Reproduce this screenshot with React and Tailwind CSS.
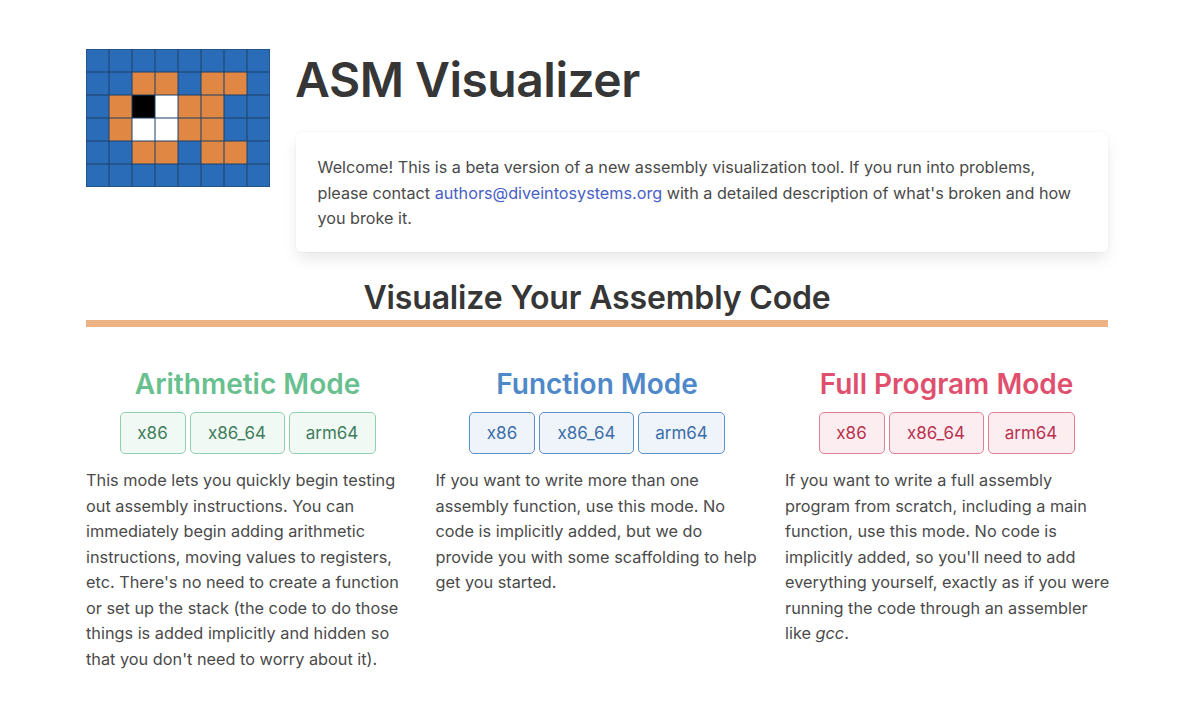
const BLUE = "#2b6cb8";
const ORANGE = "#e08744";

// 8x6 logo: b blue, o orange, k black, w white
const logoRows = ["bbbbbbbb", "bbooboob", "bokwoobb", "bowwoobb", "bboobOOb".toLowerCase(), "bbbbbbbb"];
const logoColors = { b: BLUE, o: ORANGE, k: "#000000", w: "#ffffff" };

function Logo() {
  return (
    <svg width="184" height="138" viewBox="0 0 184 138" className="shrink-0">
      {logoRows.map((row, y) =>
        row.split("").map((c, x) => (
          <rect key={x + "-" + y} x={x * 23} y={y * 23} width="23" height="23" fill={logoColors[c]} />
        ))
      )}
      {[0, 1, 2, 3, 4, 5, 6, 7, 8].map((i) => (
        <line key={"v" + i} x1={i * 23} y1="0" x2={i * 23} y2="138" stroke="#1d3f66" strokeWidth="1" />
      ))}
      {[0, 1, 2, 3, 4, 5, 6].map((i) => (
        <line key={"h" + i} x1="0" y1={i * 23} x2="184" y2={i * 23} stroke="#1d3f66" strokeWidth="1" />
      ))}
    </svg>
  );
}

const styles = {
  green: {
    title: "text-[#68c08f]",
    btn: "bg-[#f1f9f4] border-[#93cfae] text-[#3f7d5c]",
  },
  blue: {
    title: "text-[#4f88c9]",
    btn: "bg-[#eff4fb] border-[#5c8fce] text-[#3c6ea8]",
  },
  red: {
    title: "text-[#e0506e]",
    btn: "bg-[#fcedf0] border-[#e17f95] text-[#b8324f]",
  },
};

const arches = [
  { name: "x86", cls: "w-[66px]" },
  { name: "x86_64", cls: "w-[95px]" },
  { name: "arm64", cls: "w-[87px]" },
];

function Mode({ title, color, children }) {
  const s = styles[color];
  return (
    <div className="w-[323px]">
      <h2 className={"text-[28px] leading-[34px] font-semibold text-center " + s.title}>{title}</h2>
      <div className="flex justify-center gap-1 mt-[11px]">
        {arches.map((a) => (
          <button key={a.name} className={"h-[42px] pt-[2px] border rounded-[5px] text-[17px] " + a.cls + " " + s.btn}>
            {a.name}
          </button>
        ))}
      </div>
      <p className="mt-[14.5px] -mr-[3px] text-[16.3px] leading-[25.5px] text-[#4a4a4a]">{children}</p>
    </div>
  );
}

export default function App() {
  return (
    <div className="min-h-[721px] bg-white px-[86px] pt-[49px] text-[#363636] font-['Inter',sans-serif]">
      <div className="w-[1022px]">
        <div className="flex gap-[26px]">
          <Logo />
          <div className="flex-1">
            <h1 className="text-[48px] leading-[60px] font-semibold mt-[1px] -ml-px tracking-[-0.5px]">ASM Visualizer</h1>
            <div className="mt-[22px] bg-white rounded-md pl-[21.5px] pr-[22px] pt-[23px] pb-[20px] shadow-[0_8px_16px_-2px_rgba(10,10,10,0.1),0_0_0_1px_rgba(10,10,10,0.02)] text-[16.2px] leading-[25.5px] text-[#4a4a4a]">
              Welcome! This is a beta version of a new assembly visualization tool. If you run into problems, please
              contact <a className="text-[#485fc7]">authors@diveintosystems.org</a> with a detailed description of
              what's broken and how you broke it.
            </div>
          </div>
        </div>
        <h2 className="mt-[26px] text-[32px] leading-[40px] font-semibold text-center text-[#363636] tracking-[-0.15px]">
          Visualize Your Assembly Code
        </h2>
        <div className="mt-[2px] h-[7px] bg-[#eeb385]" />
        <div className="flex justify-between mt-[40px]">
          <Mode title="Arithmetic Mode" color="green">
            This mode lets you quickly begin testing out assembly instructions. You can immediately begin adding
            arithmetic instructions, moving values to registers, etc. There's no need to create a function or set up
            the stack (the code to do those things is added implicitly and hidden so that you don't need to worry about
            it).
          </Mode>
          <Mode title="Function Mode" color="blue">
            If you want to write more than one assembly function, use this mode. No code is implicitly added, but we do
            provide you with some scaffolding to help get you started.
          </Mode>
          <Mode title="Full Program Mode" color="red">
            If you want to write a full assembly program from scratch, including a main function, use this mode. No
            code is implicitly added, so you'll need to add everything yourself, exactly as if you were running the code
            through an assembler like <em>gcc</em>.
          </Mode>
        </div>
      </div>
    </div>
  );
}
